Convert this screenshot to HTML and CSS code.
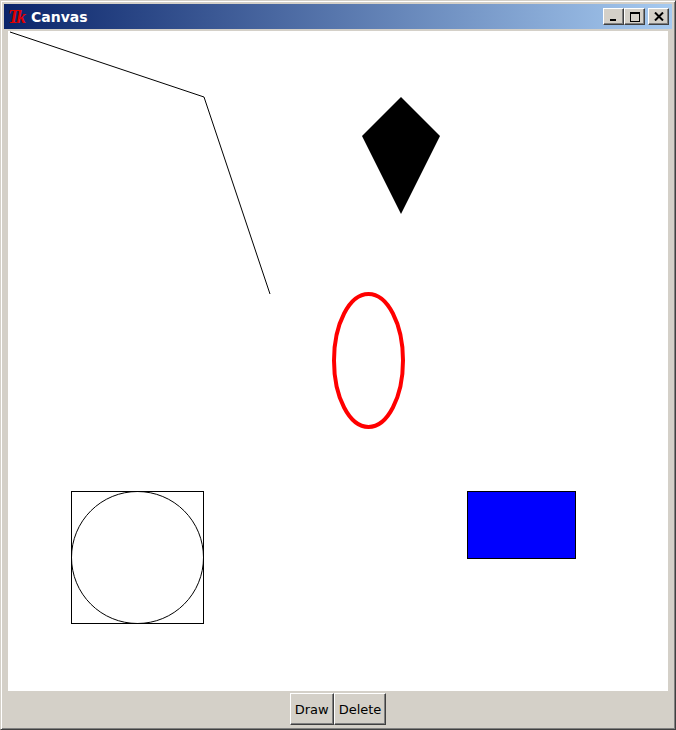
FILE: index.html
```html
<!DOCTYPE html>
<html>
<head>
<meta charset="utf-8">
<link rel="stylesheet" href="styles.css">
</head>
<body>
<div class="window">
  <div class="titlebar">
    <span class="tk-icon">Tk</span>
    <span class="title">Canvas</span>
    <div class="controls">
      <div class="cbtn"><svg width="8" height="8" viewBox="0 0 8 8"><rect x="0" y="6" width="6" height="2" fill="#000"/></svg></div>
      <div class="cbtn"><svg width="10" height="10" viewBox="0 0 10 10"><rect x="0.5" y="0.5" width="9" height="9" fill="none" stroke="#000"/><rect x="0" y="0" width="10" height="2" fill="#000"/></svg></div>
      <div class="cbtn close"><svg width="10" height="9" viewBox="0 0 10 9"><path d="M1 0.5 L9 8.5 M9 0.5 L1 8.5" stroke="#000" stroke-width="2"/></svg></div>
    </div>
  </div>
  <div class="canvas">
    <svg width="660" height="660" viewBox="0 0 660 660">
      <polyline points="2,1 196,66 262,263" fill="none" stroke="#000" stroke-width="1"/>
      <polygon points="393,66 354,105 393,183 432,105" fill="#000"/>
      <ellipse cx="360.5" cy="329.5" rx="34.5" ry="66.5" fill="none" stroke="#ff0000" stroke-width="4"/>
      <rect x="63.5" y="460.5" width="132" height="132" fill="none" stroke="#000"/>
      <circle cx="129.5" cy="526.5" r="66" fill="none" stroke="#000"/>
      <rect x="459.5" y="460.5" width="108" height="67" fill="#0000ff" stroke="#000"/>
    </svg>
  </div>
  <div class="bottombar">
    <button class="btn">Draw</button>
    <button class="btn">Delete</button>
  </div>
</div>
</body>
</html>
```

FILE: styles.css
```css
html, body {
  margin: 0;
  padding: 0;
  background: #d4d0c8;
}
.window {
  width: 676px;
  height: 730px;
  box-sizing: border-box;
  background: #d4d0c8;
  border-style: solid;
  border-width: 1px;
  border-color: #d4d0c8 #404040 #404040 #d4d0c8;
  box-shadow: inset 1px 1px 0 #ffffff, inset -1px -1px 0 #808080;
  padding: 3px;
  display: flex;
  flex-direction: column;
  font-family: "DejaVu Sans", "Liberation Sans", sans-serif;
}
.titlebar {
  height: 25px;
  background: linear-gradient(to right, #0a246a, #a6caf0);
  display: flex;
  align-items: center;
  padding-left: 4px;
  flex-shrink: 0;
}
.tk-icon {
  color: #e00000;
  font-family: "Liberation Serif", serif;
  font-style: italic;
  font-weight: bold;
  font-size: 19px;
  letter-spacing: -3px;
  width: 23px;
  line-height: 1;
}
.title {
  color: #ffffff;
  font-weight: bold;
  font-size: 14px;
  font-family: "DejaVu Sans", sans-serif;
}
.controls {
  margin-left: auto;
  display: flex;
  margin-right: 3px;
}
.cbtn {
  width: 21px;
  height: 17px;
  box-sizing: border-box;
  background: #d4d0c8;
  border: 1px solid;
  border-color: #ffffff #404040 #404040 #ffffff;
  box-shadow: inset -1px -1px 0 #808080;
  display: flex;
  align-items: center;
  justify-content: center;
}
.cbtn.close {
  margin-left: 3px;
}
.canvas {
  margin: 2px 4px 0 4px;
  width: 660px;
  height: 660px;
  background: #ffffff;
  flex-shrink: 0;
}
.canvas svg {
  display: block;
}
.bottombar {
  display: flex;
  justify-content: center;
  padding-top: 2px;
  padding-left: 0;
}
.btn {
  height: 32px;
  padding: 0 4px;
  margin: 0;
  background: #d4d0c8;
  border: 1px solid;
  border-color: #ffffff #404040 #404040 #ffffff;
  box-shadow: inset -1px -1px 0 #808080;
  font-family: "DejaVu Sans", "Liberation Sans", sans-serif;
  font-size: 13px;
  color: #000;
}
```
